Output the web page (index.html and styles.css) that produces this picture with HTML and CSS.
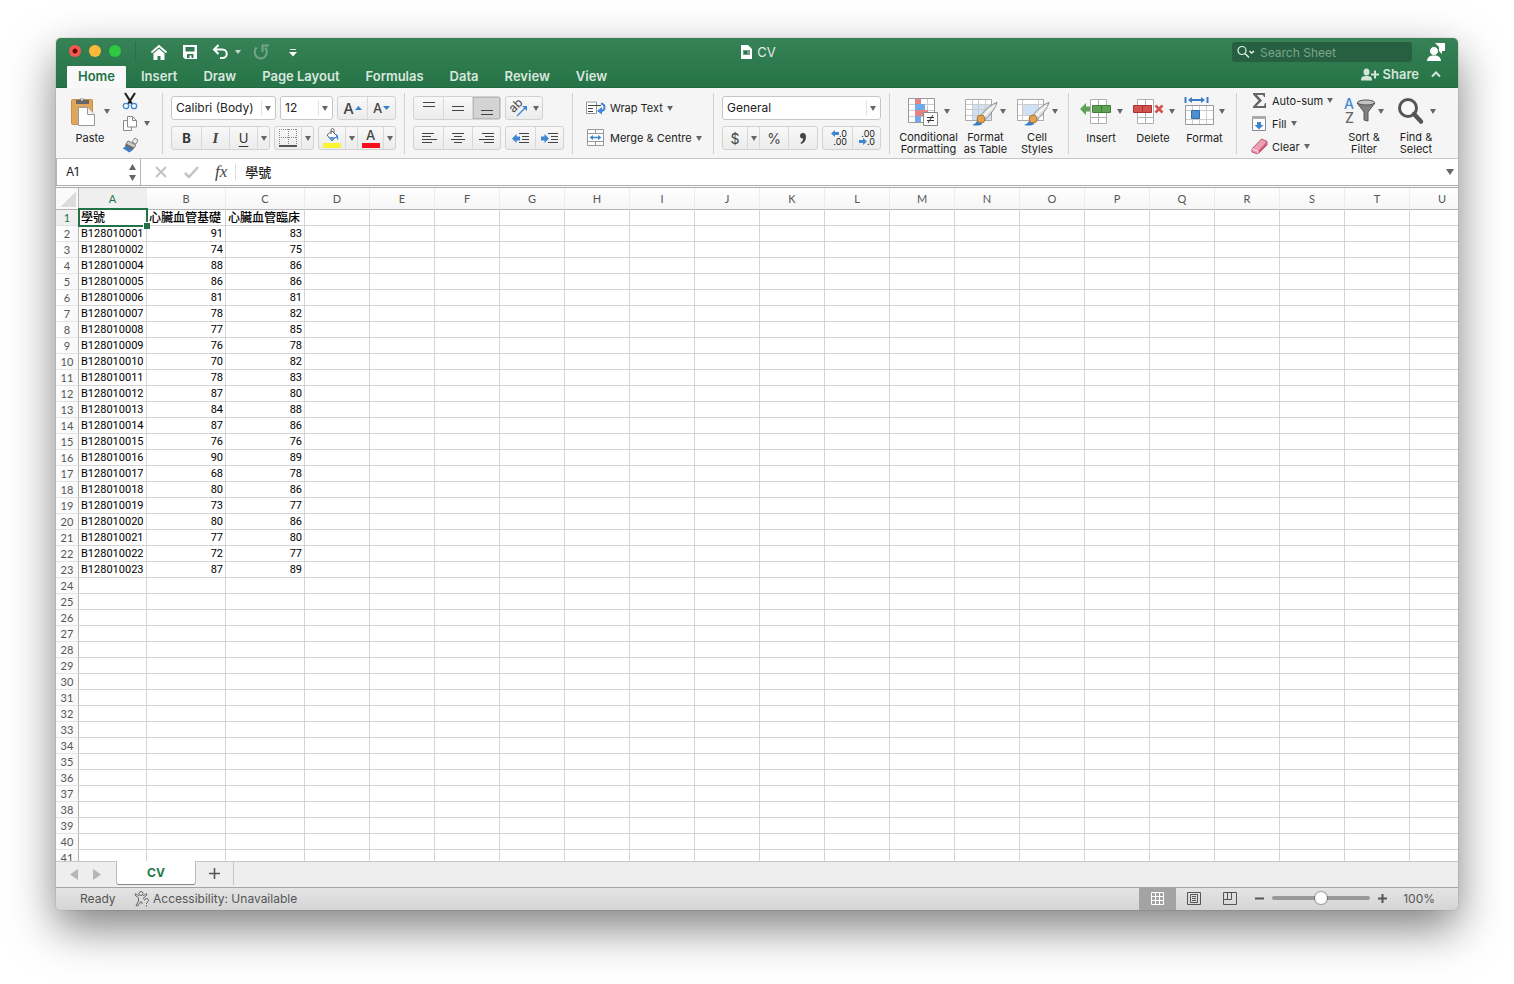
FILE: index.html
```
<!DOCTYPE html>
<html lang="en">

<head>
  <meta charset="UTF-8">
  <meta name="viewport" content="width=device-width, initial-scale=1.0">
  <title>CV</title>
  <link rel="stylesheet" href="styles.css">
</head>

<body>
  <div class="window">
    <header class="top">
      <div class="titlebar">
        <div class="lights">
          <button class="light red" aria-label="Close"></button>
          <button class="light yellow" aria-label="Minimise"></button>
          <button class="light green" aria-label="Zoom"></button>
        </div>
        <div class="quick">
          <button aria-label="Home">
            <svg width="18" height="16" viewBox="0 0 18 16"><path d="M1.500 8.500L9 2l7.500 6.500" fill="none" stroke="#fff" stroke-width="2"/><path d="M3.500 9.500L9 4.800l5.500 4.700V16h-4v-4h-3v4h-4z" fill="#fff"/></svg>
          </button>
          <button aria-label="Save">
            <svg width="16" height="16" viewBox="0 0 16 16"><path d="M1 1h14v14H3l-2-2z" fill="#fff"/><path d="M3.500 3h9v4.500h-9zM5 10h6.500v4H9.500v-2.500h-2V14H5z" fill="#2f7a50"/></svg>
          </button>
          <button aria-label="Undo">
            <svg width="17" height="16" viewBox="0 0 17 16"><path d="M6.500 1L2 5.500 6.500 10M2 5.500h8.500a4 4 0 0 1 0 8.500H8" fill="none" stroke="#fff" stroke-width="2"/></svg>
          </button>
          <span class="caret light-caret"></span>
          <button class="redo" aria-label="Redo">
            <svg width="16" height="16" viewBox="0 0 16 16"><path d="M3.500 3.500a6 6.500 0 1 0 8.500 0M9.500 8V1.500H16" fill="none" stroke="#73a68a" stroke-width="2"/></svg>
          </button>
          <button class="customise" aria-label="Customise toolbar">
            <svg width="8" height="9" viewBox="0 0 8 9"><path d="M1 1.500h6" stroke="#dfeae4" stroke-width="1"/><path d="M0 4h8L4 8.500z" fill="#fff"/></svg>
          </button>
        </div>
        <div class="doc-title">
          <svg width="11" height="14" viewBox="0 0 11 14"><path d="M0 0h7l4 4v10H0z" fill="#fff"/><path d="M2 5h7v5H2z" fill="#6da487"/><path d="M3 6h3v3H3z" fill="#277449"/></svg>
          <span>CV</span>
        </div>
        <div class="title-right">
          <label class="search">
            <svg width="20" height="14" viewBox="0 0 20 14"><circle cx="6" cy="5.500" r="4" fill="none" stroke="#e6efe9" stroke-width="1.200"/><path d="M9 8.500l4 4M13.500 6l2.200 2 2.200-2" fill="none" stroke="#e6efe9" stroke-width="1.400"/></svg>
            <input type="text" placeholder="Search Sheet" aria-label="Search Sheet">
          </label>
          <button class="user" aria-label="Account">
            <svg width="20" height="20" viewBox="0 0 20 20"><path d="M9 1h10v8h-3v3l-3-3V5z" fill="#fff"/><circle cx="8" cy="9" r="4.500" fill="#fff" stroke="#2f7a50"/><path d="M1 19c.5-4 2.500-5.500 7-5.500s6.500 1.500 7 5.500z" fill="#fff"/></svg>
          </button>
        </div>
      </div>
      <nav class="tabs">
        <button class="tab active">Home</button>
        <button class="tab">Insert</button>
        <button class="tab">Draw</button>
        <button class="tab">Page Layout</button>
        <button class="tab">Formulas</button>
        <button class="tab">Data</button>
        <button class="tab">Review</button>
        <button class="tab">View</button>
        <div class="share">
          <button>
            <svg width="18" height="13" viewBox="0 0 18 13"><ellipse cx="5.500" cy="4" rx="3" ry="3.500" fill="#d4e4db"/><path d="M0 12.500c0-4 2-4.500 5.500-4.500s5.500.5 5.500 4.500z" fill="#d4e4db"/><path d="M14 2.500v8M10 6.500h8" stroke="#d4e4db" stroke-width="2"/></svg>
            Share
          </button>
          <button aria-label="Collapse ribbon">
            <svg width="10" height="7" viewBox="0 0 10 7"><path d="M1 5.500l4-4 4 4" fill="none" stroke="#d4e4db" stroke-width="2"/></svg>
          </button>
        </div>
      </nav>
    </header>

    <section class="ribbon">
      <div class="group clipboard">
        <button class="big paste">
          <span class="big-icon">
            <svg width="26" height="31" viewBox="0 0 26 31"><rect x="1.500" y="3.500" width="21" height="25" rx="1" fill="#dfa75e" stroke="#c98f48"/><path d="M6 8V4h3a3.500 3.500 0 0 1 6 0h4v4z" fill="#666"/><circle cx="12" cy="3.500" r="1.200" fill="#ddd"/><path d="M8.500 11.500h9l7 7v11h-16z" fill="#fff" stroke="#999"/><path d="M17.500 11.500v7h7" fill="#f2f2f2" stroke="#999"/></svg>
            <i class="caret"></i>
          </span>
          Paste
        </button>
        <div class="clip-tools">
          <button aria-label="Cut">
            <svg width="16" height="17" viewBox="0 0 16 17"><path d="M3 0l7 11M13 0L6 11" stroke="#222" stroke-width="2.200"/><circle cx="4" cy="13" r="2.700" fill="none" stroke="#3f87d4" stroke-width="1.300"/><circle cx="12" cy="13" r="2.700" fill="none" stroke="#3f87d4" stroke-width="1.300"/></svg>
          </button>
          <button aria-label="Copy">
            <svg width="16" height="17" viewBox="0 0 16 17"><path d="M1.500 5.500h8v10h-8z" fill="#fff" stroke="#8a8a8a"/><path d="M5.500 1.500h5l4 4v6.500h-9z" fill="#fff" stroke="#8a8a8a"/><path d="M10.500 1.500v4h4" fill="none" stroke="#8a8a8a"/></svg>
            <i class="caret"></i>
          </button>
          <button aria-label="Format painter">
            <svg width="17" height="17" viewBox="0 0 17 17"><path d="M10 5l3-4 3 2-2 4z" fill="#eee" stroke="#888"/><path d="M6 4l8 4-2 3-8-4z" fill="#ccc" stroke="#777"/><path d="M4 7l8 4c-1 2-3 4-5 4.500-2-1.500-4-3.500-6.500-4 2-1 3-2.500 3.500-4.500z" fill="#3f7fc0"/><path d="M4 7l8 4-1 1.500-8-4z" fill="#7d6657"/></svg>
          </button>
        </div>
      </div>

      <div class="group stack font-group">
        <div class="row">
          <span class="combo font-name"><select aria-label="Font"><option>Calibri (Body)</option></select></span>
          <span class="combo font-size"><select aria-label="Font size"><option>12</option></select></span>
          <span class="buttons">
            <button class="w29" aria-label="Increase font size"><b class="grow">A</b><svg width="7" height="4" viewBox="0 0 7 4"><path d="M0 4l3.500-4L7 4z" fill="#3a80c9"/></svg></button>
            <button class="w28" aria-label="Decrease font size"><b class="shrink">A</b><svg width="7" height="4" viewBox="0 0 7 4"><path d="M0 0l3.500 4L7 0z" fill="#3a80c9"/></svg></button>
          </span>
        </div>
        <div class="row">
          <span class="buttons">
            <button class="w29 bold">B</button>
            <button class="w28 italic">I</button>
            <button class="w28 underline">U</button>
            <button class="drop" aria-label="Underline style"><i class="caret"></i></button>
          </span>
          <span class="buttons">
            <button class="w26" aria-label="Borders"><svg width="18" height="18" viewBox="0 0 18 18"><path d="M.5 0v16M17.500 0v16M9.500 0v16M0 .5h18M0 8.500h18" stroke="#888" stroke-dasharray="1 1"/><path d="M0 17h18" stroke="#222" stroke-width="1.500"/></svg></button>
            <button class="drop" aria-label="Border style"><i class="caret"></i></button>
          </span>
          <span class="buttons">
            <button class="w26" aria-label="Fill colour"><svg width="18" height="20" viewBox="0 0 18 20"><path d="M4 7l5-4 5 5-5 5z" fill="#fff" stroke="#666"/><path d="M5 9h8l-4 4z" fill="#5d9be0"/><path d="M8 6V1.500q1.500-2 3 0V5" fill="none" stroke="#666"/><path d="M13 6q3 1 2 6-2-1-2-6z" fill="#3f87d4"/><rect y="15" width="18" height="5" rx="1" fill="#f9f532"/></svg></button>
            <button class="drop" aria-label="Fill colours"><i class="caret"></i></button>
            <button class="w26 font-colour" aria-label="Font colour"><span>A</span></button>
            <button class="drop" aria-label="Font colours"><i class="caret"></i></button>
          </span>
        </div>
      </div>

      <div class="group stack">
        <div class="row">
          <span class="buttons">
            <button class="w29" aria-label="Top align"><svg width="16" height="16" viewBox="0 0 16 16"><path d="M2 2.500h12M2 6.500h12" stroke="#444"/></svg></button>
            <button class="w29" aria-label="Middle align"><svg width="16" height="16" viewBox="0 0 16 16"><path d="M2 6.500h12M2 10.500h12" stroke="#444"/></svg></button>
            <button class="w28 pressed" aria-label="Bottom align"><svg width="16" height="16" viewBox="0 0 16 16"><path d="M2 10.500h12M2 14.500h12" stroke="#444"/></svg></button>
          </span>
          <span class="buttons">
            <button class="orient" aria-label="Orientation"><svg width="18" height="18" viewBox="0 0 18 18"><g transform="rotate(-45 7 8)"><text x="0" y="10" font-family="Inter, sans-serif" font-size="12" fill="#444">ab</text></g><path d="M7 17l8-8" stroke="#3f87d4" stroke-width="1.300"/><path d="M12 7h5v5z" fill="#3f87d4"/></svg><i class="caret"></i></button>
          </span>
        </div>
        <div class="row">
          <span class="buttons">
            <button class="w29" aria-label="Align left"><svg width="16" height="11" viewBox="0 0 16 11"><path d="M1 .5h12M1 3.500h9M1 6.500h15M1 9.500h10" stroke="#444"/></svg></button>
            <button class="w29" aria-label="Centre"><svg width="16" height="11" viewBox="0 0 16 11"><path d="M2 .5h12M4 3.500h8M1 6.500h14M4 9.500h8" stroke="#444"/></svg></button>
            <button class="w28" aria-label="Align right"><svg width="16" height="11" viewBox="0 0 16 11"><path d="M3 .5h12M6 3.500h9M0 6.500h15M5 9.500h10" stroke="#444"/></svg></button>
          </span>
          <span class="buttons">
            <button class="w29" aria-label="Decrease indent"><svg width="17" height="11" viewBox="0 0 17 11"><path d="M0 5.500L4.500 1v2.500H8v4H4.500V10z" fill="#3f87d4"/><path d="M7 .5h10M10 3.500h7M10 6.500h7M7 9.500h10" stroke="#444"/></svg></button>
            <button class="w28" aria-label="Increase indent"><svg width="17" height="11" viewBox="0 0 17 11"><path d="M8 5.500L3.500 1v2.500H0v4h3.500V10z" fill="#3f87d4"/><path d="M7 .5h10M10 3.500h7M10 6.500h7M7 9.500h10" stroke="#444"/></svg></button>
          </span>
        </div>
      </div>

      <div class="group stack wrap-group">
        <button class="line">
          <svg width="20" height="18" viewBox="0 0 20 18"><path d="M.5 3v11.500h10V3z" fill="#fff" stroke="#999"/><path d="M2 6.500h13M2 9.500h5M2 12.500h5" stroke="#444"/><path d="M15 4.500c5 1 4.500 7.500-.5 7.500" fill="none" stroke="#3f87d4" stroke-width="2"/><path d="M11 12l5-4v7.500z" fill="#3f87d4"/></svg>
          Wrap Text <i class="caret"></i>
        </button>
        <button class="line">
          <svg width="20" height="18" viewBox="0 0 20 18"><path d="M1.500.5h16v16h-16zM1.500 4.500h16M1.500 12.500h16M9.500.5v4M9.500 12.500v4" fill="#fff" stroke="#999"/><path d="M5 8.500h9" stroke="#3f87d4" stroke-width="1.300"/><path d="M3.500 8.500L7 6v5zM15.500 8.500L12 6v5z" fill="#3f87d4"/></svg>
          Merge &amp; Centre <i class="caret"></i>
        </button>
      </div>

      <div class="group stack">
        <div class="row">
          <span class="combo number-format"><select aria-label="Number format"><option>General</option></select></span>
        </div>
        <div class="row">
          <span class="buttons">
            <button class="w24 symbol">$</button>
            <button class="drop" aria-label="Currencies"><i class="caret"></i></button>
            <button class="w29 symbol">%</button>
            <button class="w29" aria-label="Comma style"><svg width="8" height="13" viewBox="0 0 8 13"><path d="M1 3.500a2.700 2.700 0 0 1 3-2.500c2 0 3 1.500 3 4 0 3.500-2 6-5 7l-.5-1.500C3 10 4 8.500 4.200 6.500 2 7 1 5.500 1 3.500z" fill="#444"/></svg></button>
          </span>
          <span class="buttons">
            <button class="w29 decimals" aria-label="Increase decimal">
              <span><svg width="8" height="7" viewBox="0 0 8 7"><path d="M0 3.500L4 0v2h4v3H4v2z" fill="#3f87d4"/></svg>.0</span>
              <span>.00</span>
            </button>
            <button class="w28 decimals" aria-label="Decrease decimal">
              <span>.00</span>
              <span><svg width="8" height="7" viewBox="0 0 8 7"><path d="M8 3.500L4 0v2H0v3h4v2z" fill="#3f87d4"/></svg>.0</span>
            </button>
          </span>
        </div>
      </div>

      <div class="group styles-group">
        <button class="big w57">
          <span class="big-icon">
            <svg width="31" height="30" viewBox="0 0 31 30"><path d="M.5 2.500h26v24H.5z" fill="#fff"/><path d="M7.500 3v23M19.500 3v23M1 8.500h25M1 14.500h25M1 20.500h25" stroke="#ccc"/><path d="M7 3h6v5H7zM7 14h13v6H7z" fill="#e58383"/><path d="M7 8h10v6H7zM7 20h6v6H7z" fill="#6faaec"/><path d="M.5 2.500h26v24H.5z" fill="none" stroke="#999"/><path d="M15.500 16.500h14v13h-14z" fill="#fff" stroke="#888"/><path d="M19 21.500h7M19 24.500h7M25 19l-5 8" stroke="#333"/></svg>
            <i class="caret"></i>
          </span>
          Conditional<br>Formatting
        </button>
        <button class="big w57">
          <span class="big-icon">
            <svg width="33" height="30" viewBox="0 0 33 30"><path d="M.5 3.500h26v21H.5z" fill="#fff"/><path d="M7 9h20v16H7z" fill="#cfe1f5"/><path d="M7.500 4v20M13.500 4v20M20.500 4v20M1 8.500h25M1 13.500h25M1 19.500h25" stroke="#ccc"/><path d="M.5 3.500h26v21H.5z" fill="none" stroke="#aaa"/><path d="M32 6.500c-6 2-12 7-16 13l4 4c5-4 10-11 12-17z" fill="#e2e2e2" stroke="#888"/><path d="M30 9.500c-5 4-9 8-12 11.500" stroke="#fff" stroke-width="1.500"/><path d="M7 29q4-1 5.500-5.500l5 4.500q-4 2.500-10.500 1z" fill="#2f7fd3"/><circle cx="16" cy="23" r="4" fill="#e0a353" stroke="#a87436"/></svg>
            <i class="caret tight"></i>
          </span>
          Format<br>as Table
        </button>
        <button class="big w46">
          <span class="big-icon">
            <svg width="33" height="30" viewBox="0 0 33 30"><path d="M.5 3.500h26v21H.5z" fill="#fff"/><path d="M5 9h17v11H5z" fill="#cfe1f5"/><path d="M5.500 4v20M21.500 4v20M1 8.500h25M1 19.500h25" stroke="#ccc"/><path d="M.5 3.500h26v21H.5z" fill="none" stroke="#aaa"/><path d="M32 6.500c-6 2-12 7-16 13l4 4c5-4 10-11 12-17z" fill="#e2e2e2" stroke="#888"/><path d="M30 9.500c-5 4-9 8-12 11.500" stroke="#fff" stroke-width="1.500"/><path d="M7 29q4-1 5.500-5.500l5 4.500q-4 2.500-10.500 1z" fill="#2f7fd3"/><circle cx="16" cy="23" r="4" fill="#e0a353" stroke="#a87436"/></svg>
            <i class="caret tight"></i>
          </span>
          Cell<br>Styles
        </button>
      </div>

      <div class="group cells-group">
        <button class="big w52">
          <span class="big-icon">
            <svg width="32" height="30" viewBox="0 0 32 30"><path d="M10.500 2.500h16v24h-16zM10.500 20.500h16M18.500 2.500v24" fill="#fff" stroke="#b0b0b0"/><path d="M12.500 8.500h18v7h-18z" fill="#5da156" stroke="#3f7d39"/><path d="M21.500 9v6" stroke="#3f7d39"/><path d="M0 12l6-6v3.500h4v5H6V18z" fill="#5da156"/></svg>
            <i class="caret"></i>
          </span>
          Insert
        </button>
        <button class="big w52">
          <span class="big-icon">
            <svg width="32" height="30" viewBox="0 0 32 30"><path d="M5.500 2.500h16v24h-16zM5.500 20.500h16M13.500 2.500v24" fill="#fff" stroke="#b0b0b0"/><path d="M1.500 8.500h18v7h-18z" fill="#d3504f" stroke="#a83535"/><path d="M10.500 9v6" stroke="#a83535"/><path d="M23.500 8.500l7 7M30.500 8.500l-7 7" stroke="#d3504f" stroke-width="2.500"/></svg>
            <i class="caret"></i>
          </span>
          Delete
        </button>
        <button class="big w51">
          <span class="big-icon">
            <svg width="30" height="30" viewBox="0 0 30 30"><path d="M1.500 8.500h28v19h-28z" fill="#fff"/><path d="M8.500 9v18M15.500 9v18M22.500 9v18M2 13.500h27M2 22.500h27" stroke="#ccc"/><path d="M1.500 8.500h28v19h-28z" fill="none" stroke="#999"/><path d="M7.500 13.500h8v8h-8z" fill="#4d8fd1" stroke="#2f6dab"/><path d="M1.500 0v6M23.500 0v6M6 3h13" stroke="#3a7cc0" stroke-width="2"/><path d="M4 3l4-3v6zM21 3l-4-3v6z" fill="#3a7cc0"/></svg>
            <i class="caret"></i>
          </span>
          Format
        </button>
      </div>

      <div class="group editing">
        <div class="edit-list">
          <button class="line">
            <svg width="17" height="17" viewBox="0 0 17 17"><path d="M2 1h12v4h-1l-1-2H6l5 5.500L5.500 14H13l1-3h1v5H2v-1.500l5.500-6L2 2.500z" fill="#666"/></svg>
            Auto-sum <i class="caret"></i>
          </button>
          <button class="line">
            <svg width="17" height="17" viewBox="0 0 17 17"><path d="M1.500 1.500h13v14h-13z" fill="#fff" stroke="#888"/><path d="M1 1h14v3H1z" fill="#aaa"/><path d="M6 7h4v3h2.500L8 14.500 3.500 10H6z" fill="#3f87d4"/></svg>
            Fill <i class="caret"></i>
          </button>
          <button class="line">
            <svg width="17" height="17" viewBox="0 0 17 17"><path d="M1 11L10.500 1l5.500 2.500v3.500L7 16l-6-2z" fill="#ee9fb2" stroke="#b5546c"/><path d="M7 13l9-9.500V7L7 16z" fill="#cf5f7c"/><path d="M1 11l6 2v3" fill="none" stroke="#fff" stroke-width=".7"/></svg>
            Clear <i class="caret"></i>
          </button>
        </div>
        <button class="big w52">
          <span class="big-icon">
            <svg width="32" height="30" viewBox="0 0 32 30"><text x="0" y="13" font-family="Inter, sans-serif" font-size="14" font-weight="500" fill="#3f87d4">A</text><text x="1" y="27" font-family="Inter, sans-serif" font-size="14" font-weight="500" fill="#666">Z</text><path d="M13 7l7 9v8l4 1v-9l7-9z" fill="#808080" stroke="#555"/><ellipse cx="22" cy="6.500" rx="8.500" ry="2.500" fill="#c4c4c4" stroke="#555"/></svg>
            <i class="caret tight"></i>
          </span>
          Sort &amp;<br>Filter
        </button>
        <button class="big w52">
          <span class="big-icon">
            <svg width="28" height="30" viewBox="0 0 28 30"><circle cx="11" cy="12" r="8.500" fill="#f9f9f9" stroke="#555" stroke-width="3"/><path d="M17 18l7 7.500" stroke="#555" stroke-width="4.500" stroke-linecap="round"/></svg>
            <i class="caret"></i>
          </span>
          Find &amp;<br>Select
        </button>
      </div>
    </section>

    <section class="formula-bar">
      <div class="name-box">
        <input type="text" value="A1" aria-label="Name box">
        <svg width="7" height="17" viewBox="0 0 7 17"><path d="M0 6l3.500-6L7 6zM0 11l3.500 6L7 11z" fill="#666"/></svg>
      </div>
      <div class="formula-tools">
        <button aria-label="Cancel"><svg width="14" height="14" viewBox="0 0 14 14"><path d="M2 2l10 10M12 2L2 12" stroke="#c4c4c4" stroke-width="2"/></svg></button>
        <button aria-label="Enter"><svg width="15" height="14" viewBox="0 0 15 14"><path d="M1 8l4 4 9-10" fill="none" stroke="#c4c4c4" stroke-width="2.500"/></svg></button>
        <button class="fx" aria-label="Insert function">fx</button>
      </div>
      <input class="formula" type="text" value="學號" aria-label="Formula">
      <span class="expand"></span>
    </section>

    <main class="sheet">
      <table id="grid">
        <colgroup id="cols"></colgroup>
        <thead></thead>
        <tbody></tbody>
      </table>
    </main>

    <section class="sheet-tabs">
      <button class="scroll" aria-label="Previous sheet"><svg width="8" height="11" viewBox="0 0 8 11"><path d="M8 0v11L0 5.500z" fill="#b5b5b5"/></svg></button>
      <button class="scroll" aria-label="Next sheet"><svg width="8" height="11" viewBox="0 0 8 11"><path d="M0 0v11l8-5.500z" fill="#b5b5b5"/></svg></button>
      <button class="sheet-tab">CV</button>
      <button class="add" aria-label="Add sheet"><svg width="11" height="11" viewBox="0 0 11 11"><path d="M5.500 0v11M0 5.500h11" stroke="#555" stroke-width="1.600"/></svg></button>
    </section>

    <footer class="status">
      <span class="ready">Ready</span>
      <svg width="16" height="16" viewBox="0 0 16 16"><g fill="none" stroke="#666"><circle cx="7" cy="2.500" r="2"/><path d="M5 5L1.500 2.500 1 4l3.500 3v3L2 14.500l1.500.5L7 10.500 8.500 13M9 5l3.500-2.500L13 4 9.500 7v1"/><path d="M10.500 9.500q0-2 2-2t2 2q0 1-2 2.500v1M12.500 14v1.500"/></g></svg>
      <span class="access">Accessibility: Unavailable</span>
      <div class="views">
        <button class="view active" aria-label="Normal"><svg width="13" height="13" viewBox="0 0 13 13"><path d="M.5.5h12v12H.5zM.5 4.500h12M.5 8.500h12M4.500.5v12M8.500.5v12" fill="none" stroke="#fff"/></svg></button>
        <button class="view" aria-label="Page layout"><svg width="14" height="13" viewBox="0 0 14 13"><path d="M.5.5h13v12H.5zM3.500 2.500h7v8h-7zM5 4.500h4M5 6.500h4M5 8.500h4" fill="none" stroke="#555"/></svg></button>
        <button class="view" aria-label="Page break preview"><svg width="14" height="13" viewBox="0 0 14 13"><path d="M.5.5h13v12H.5zM.5 7.500h8V.5M4.500.5v7" fill="none" stroke="#555"/></svg></button>
      </div>
      <div class="zoom">
        <button aria-label="Zoom out"><svg width="9" height="9" viewBox="0 0 9 9"><path d="M0 4.500h9" stroke="#555" stroke-width="2"/></svg></button>
        <input type="range" min="0" max="100" value="50" aria-label="Zoom">
        <button aria-label="Zoom in"><svg width="9" height="9" viewBox="0 0 9 9"><path d="M0 4.500h9M4.500 0v9" stroke="#555" stroke-width="2"/></svg></button>
        <span class="percent">100%</span>
      </div>
    </footer>
  </div>
  <script src="sheet.js"></script>
</body>

</html>
```
FILE: styles.css
```
* {
  box-sizing: border-box;
}

body {
  margin: 0;
  height: 100vh;
  padding: 38px 56px 74px;
  background: #fff;
  font-family: Inter, "Noto Sans CJK TC", sans-serif;
  font-size: 12px;
  color: #222;
  overflow: hidden;
}

button,
input,
select {
  font: inherit;
  color: inherit;
  background: none;
  border: 0;
  margin: 0;
  padding: 0;
  outline: 0;
}

button {
  display: flex;
  align-items: center;
  justify-content: center;
  flex-shrink: 0;
}

svg {
  display: block;
  flex-shrink: 0;
  overflow: visible;
}

.window {
  display: flex;
  flex-direction: column;
  height: 100%;
  overflow: hidden;
  border-radius: 5px;
  background: #fff;
  box-shadow: 0 0 1px rgba(0, 0, 0, 0.6), 0 18px 45px rgba(0, 0, 0, 0.5);
}

.caret {
  flex-shrink: 0;
  width: 0;
  height: 0;
  border: 3px solid transparent;
  border-top: 5px solid #666;
  border-bottom: 0;
}

/* title bar and tabs */

.top {
  background: linear-gradient(#378257, #257346);
  border-bottom: 1px solid #1f673d;
  color: #fff;
}

.titlebar {
  display: flex;
  align-items: center;
  position: relative;
  height: 28px;
}

.lights {
  display: flex;
  gap: 8px;
  width: 80px;
  height: 20px;
  padding: 0 0 2px 13px;
  align-items: center;
  border-right: 1px solid #2a6f49;
}

.light {
  width: 12px;
  height: 12px;
  border-radius: 50%;
}

.light.red {
  background: radial-gradient(#5c0f0a 2px, #f9564f 3px);
}

.light.yellow {
  background: #fdb83a;
}

.light.green {
  background: #2fc840;
}

.quick {
  display: flex;
  align-items: center;
  padding-left: 14px;
}

.quick button + button {
  margin-left: 14px;
}

.quick .light-caret {
  margin-left: 6px;
  border-top: 4px solid #c5dacd;
}

.quick .redo {
  margin-left: 12px;
}

.quick .redo + .customise {
  margin-left: 20px;
}

.doc-title {
  position: absolute;
  left: 0;
  right: 0;
  display: flex;
  justify-content: center;
  align-items: center;
  gap: 5px;
  padding-left: 3px;
  pointer-events: none;
  font-size: 13px;
  color: #e3ede7;
}

.title-right {
  display: flex;
  align-items: center;
  gap: 14px;
  margin-left: auto;
  padding-right: 12px;
}

.search {
  display: flex;
  align-items: center;
  gap: 4px;
  width: 180px;
  height: 20px;
  padding: 0 4px;
  border-radius: 3px;
  background: #276041;
}

.search input {
  flex: 1;
  min-width: 0;
}

.search input::placeholder {
  color: #7ba48d;
  opacity: 1;
}

.tabs {
  display: flex;
  height: 21px;
  padding-left: 11px;
}

.tab {
  padding: 0 13px 2px;
  font-size: 13px;
  font-weight: 600;
  color: #d9e7df;
}

.tab.active {
  width: 59px;
  height: 22px;
  margin-right: 2px;
  padding: 0 0 3px;
  border-radius: 1px 1px 0 0;
  background: #f8f8f8;
  color: #217346;
}

.share {
  display: flex;
  align-items: center;
  gap: 12px;
  height: 16px;
  margin-left: auto;
  padding-right: 17px;
  font-size: 13px;
  font-weight: 600;
  color: #d4e4db;
}

.share button {
  gap: 4px;
}

/* ribbon */

.ribbon {
  display: flex;
  height: 71px;
  padding: 5px 0 4px;
  border-bottom: 1px solid #c6c6c6;
  background: #f5f5f5;
}

.group {
  display: flex;
  flex-shrink: 0;
  padding: 0 8px;
  border-right: 1px solid #d0d0d0;
}

.group:last-child {
  border-right: 0;
}

.stack {
  flex-direction: column;
  gap: 6px;
  padding-top: 3px;
}

.row {
  display: flex;
  gap: 4px;
}

.buttons {
  display: flex;
  height: 24px;
  border: 1px solid #d2d2d2;
  border-radius: 3px;
  background: linear-gradient(#f8f8f8, #ececec);
}

.buttons button + button {
  border-left: 1px solid #d8d8d8;
}

.w24 {
  width: 24px;
}

.w26 {
  width: 26px;
}

.w28 {
  width: 28px;
}

.w29 {
  width: 29px;
}

.w46 {
  width: 46px;
}

.w51 {
  width: 51px;
}

.w52 {
  width: 52px;
}

.w57 {
  width: 57px;
}

.buttons .drop {
  width: 12px;
}

.buttons .pressed {
  background: #d4d4d4;
  box-shadow: inset 0 0 0 1px #b8b8b8;
}

.orient {
  width: 36px;
  gap: 5px;
}

.combo {
  display: flex;
  position: relative;
  height: 24px;
  border: 1px solid #c6c6c6;
  border-radius: 3px;
  background: #fff;
}

.combo select {
  appearance: none;
  width: 100%;
  padding: 0 14px 2px 4px;
}

/* divider and arrow over the end of the drop-down */
.combo::before {
  content: "";
  position: absolute;
  right: 13px;
  top: 3px;
  bottom: 3px;
  border-left: 1px solid #e4e4e4;
}

.combo::after {
  content: "";
  position: absolute;
  right: 4px;
  top: 9px;
  border: 3px solid transparent;
  border-top: 5px solid #666;
  border-bottom: 0;
  pointer-events: none;
}

.font-name {
  width: 105px;
}

.font-size {
  width: 53px;
}

.number-format {
  width: 159px;
}

.grow {
  font-size: 15px;
  font-weight: 500;
}

.shrink {
  font-size: 13px;
  font-weight: 500;
}

.buttons b {
  color: #444;
  margin-right: 1px;
}

.bold {
  font-size: 13px;
  font-weight: 700;
  color: #333;
}

.italic {
  font-family: "Liberation Serif", serif;
  font-size: 15px;
  font-style: italic;
  font-weight: 700;
  color: #444;
}

.underline {
  font-size: 13px;
  text-decoration: underline;
  text-underline-offset: 3px;
  color: #333;
}

.font-colour span {
  width: 18px;
  height: 19px;
  border-bottom: 5px solid #fb0d1b;
  font-size: 13px;
  font-weight: 500;
  line-height: 13px;
  text-align: center;
  color: #444;
}

.symbol {
  font-size: 14px;
  color: #444;
}

.decimals {
  flex-direction: column;
  align-items: flex-end;
  padding-right: 5px;
  font-size: 9px;
  line-height: 8px;
  color: #222;
}

.decimals span {
  display: flex;
}

.line {
  justify-content: flex-start;
  gap: 4px;
  font-size: 11px;
}

.wrap-group {
  width: 141px;
  padding-left: 13px;
}

.wrap-group .line {
  height: 24px;
}

.big {
  flex-direction: column;
  justify-content: flex-start;
  padding-top: 3px;
  font-size: 11px;
  line-height: 12px;
}

.big-icon {
  display: flex;
  align-items: center;
  gap: 5px;
  height: 36px;
  padding-bottom: 5px;
}

.big-icon .tight {
  margin-left: -3px;
}

.clipboard {
  width: 107px;
  padding-left: 14px;
}

.paste .big-icon {
  gap: 8px;
}

.clip-tools {
  display: flex;
  flex-direction: column;
  align-items: flex-start;
  justify-content: space-between;
  margin-left: 12px;
}

.clip-tools button {
  gap: 6px;
}

.styles-group {
  padding-left: 10px;
}

.cells-group {
  padding: 0 6px;
}

.editing {
  padding-left: 14px;
}

.edit-list {
  display: flex;
  flex-direction: column;
  gap: 6px;
  width: 87px;
  margin-top: -1px;
}

/* formula bar */

.formula-bar {
  display: flex;
  align-items: center;
  height: 29px;
  border-bottom: 3px double #aaa;
  background: #fff;
}

.name-box {
  display: flex;
  align-items: center;
  width: 85px;
  height: 26px;
  padding: 0 4px 0 9px;
  border: 1px solid #b4b4b4;
  border-top: 0;
  border-bottom: 0;
}

.name-box input {
  flex: 1;
  min-width: 0;
  padding-bottom: 2px;
}

.formula-tools {
  display: flex;
  align-items: center;
  gap: 16px;
  padding: 0 8px 0 13px;
  border-right: 1px solid #ddd;
}

.fx {
  font-family: "Liberation Serif", serif;
  font-size: 17px;
  line-height: 16px;
  font-style: italic;
  color: #444;
}

.formula {
  flex: 1;
  padding: 0 0 2px 9px;
  font-size: 13px;
  font-weight: 500;
}

.expand {
  margin-right: 4px;
  border: 4px solid transparent;
  border-top: 6px solid #666;
  border-bottom: 0;
}

/* grid */

.sheet {
  flex: 1;
  min-height: 0;
  overflow: hidden;
}

table {
  width: 1px;
  table-layout: fixed;
  border-collapse: separate;
  border-spacing: 0;
  font-family: Lato, "Noto Sans CJK TC", sans-serif;
  font-size: 11px;
  line-height: 15px;
  color: #000;
}

.col-head {
  width: 23px;
}

.col-id {
  width: 68px;
}

.col-score {
  width: 79px;
}

.col-empty {
  width: 65px;
}

th {
  padding: 0;
  font-weight: 400;
  color: #555;
}

thead th {
  height: 22px;
  border-bottom: 1px solid #b4b4b4;
  border-right: 1px solid #ececec;
  background: linear-gradient(#fff, #f5f5f5);
}

tbody th {
  height: 16px;
  border-right: 1px solid #b4b4b4;
  border-bottom: 1px solid #e4e4e4;
  background: linear-gradient(to right, #fff, #f8f8f8);
}

thead .corner {
  border-right: 1px solid #b4b4b4;
  background: linear-gradient(135deg, transparent 50%, #dcdcdc 50%) 4px 4px / 16px 15px no-repeat, #fafafa;
}

th.current {
  color: #217346;
  background: #efefef;
}

td {
  height: 16px;
  padding: 1px 2px 0;
  border-right: 1px solid #d4d4d4;
  border-bottom: 1px solid #d4d4d4;
  font-family: Roboto, "Noto Sans CJK TC", sans-serif;
  line-height: 14px;
  white-space: nowrap;
}

.number {
  text-align: right;
}

.label {
  font-size: 12px;
  font-weight: 500;
}

/* selection frame and its fill handle */
.selected {
  position: relative;
}

.selected::before {
  content: "";
  position: absolute;
  inset: -2px -2px -2px -1px;
  border: 2px solid #217346;
}

.selected::after {
  content: "";
  position: absolute;
  right: -4px;
  bottom: -4px;
  width: 6px;
  height: 6px;
  background: #217346;
  border: 1px solid #fff;
  border-width: 1px 0 0 1px;
}

/* sheet tabs */

.sheet-tabs {
  display: flex;
  height: 27px;
  border-top: 1px solid #c8c8c8;
  border-bottom: 1px solid #a5a5a5;
  background: #eee;
}

.scroll {
  width: 8px;
  margin-left: 14px;
}

.scroll + .scroll {
  margin-left: 15px;
}

.sheet-tab {
  width: 80px;
  height: 24px;
  margin: -1px 0 0 15px;
  border: 1px solid #bbb;
  border-top: 0;
  border-bottom: 1px solid #888;
  border-radius: 0 0 3px 3px;
  background: #fff;
  font-weight: 700;
  color: #1f7a4a;
}

.add {
  width: 38px;
  height: 23px;
  border-right: 1px solid #c8c8c8;
}

/* status bar */

.status {
  display: flex;
  align-items: center;
  height: 22px;
  padding-left: 24px;
  background: linear-gradient(#e4e4e4, #d5d5d5);
  color: #555;
}

.ready,
.access,
.view,
.zoom {
  padding-bottom: 2px;
}

.ready {
  width: 54px;
}

.access {
  margin-left: 3px;
}

.views {
  display: flex;
  height: 100%;
  margin-left: auto;
}

.view {
  width: 36px;
}

.view.active {
  width: 37px;
  background: #a3a3a3;
}

.zoom {
  display: flex;
  align-items: center;
  gap: 8px;
  padding-left: 7px;
  padding-right: 23px;
}

.zoom input {
  appearance: none;
  width: 98px;
  height: 12px;
}

.zoom input::-webkit-slider-runnable-track {
  height: 4px;
  border-radius: 2px;
  background: #999;
}

.zoom input::-webkit-slider-thumb {
  appearance: none;
  width: 12px;
  height: 12px;
  margin-top: -4px;
  border-radius: 50%;
  background: #fff;
  box-shadow: 0 0 1px 1px rgba(0, 0, 0, 0.3);
}

.percent {
  margin-left: 8px;
}
```
FILE: sheet.js
```
const data = [
  ['學號', '心臟血管基礎', '心臟血管臨床'],
  ['B128010001', 91, 83],
  ['B128010002', 74, 75],
  ['B128010004', 88, 86],
  ['B128010005', 86, 86],
  ['B128010006', 81, 81],
  ['B128010007', 78, 82],
  ['B128010008', 77, 85],
  ['B128010009', 76, 78],
  ['B128010010', 70, 82],
  ['B128010011', 78, 83],
  ['B128010012', 87, 80],
  ['B128010013', 84, 88],
  ['B128010014', 87, 86],
  ['B128010015', 76, 76],
  ['B128010016', 90, 89],
  ['B128010017', 68, 78],
  ['B128010018', 80, 86],
  ['B128010019', 73, 77],
  ['B128010020', 80, 86],
  ['B128010021', 77, 80],
  ['B128010022', 72, 77],
  ['B128010023', 87, 89]
];

const grid = document.getElementById('grid');
const cols = document.getElementById('cols');
const sheet = grid.parentElement;

// only as many rows and columns as the sheet area can show
const ROWS = Math.ceil((sheet.clientHeight - 22) / 16);
const COLS = Math.min(26, 3 + Math.ceil((sheet.clientWidth - 249) / 65));

function addCol(name) {
  const col = document.createElement('col');
  col.className = name;
  cols.appendChild(col);
}

function addCell(row, tag, text, name) {
  const cell = document.createElement(tag);
  cell.textContent = text;
  if (name) cell.className = name;
  row.appendChild(cell);
}

addCol('col-head');
const head = grid.tHead.insertRow();
addCell(head, 'th', '', 'corner');
for (let c = 0; c < COLS; c++) {
  addCol(c === 0 ? 'col-id' : c < 3 ? 'col-score' : 'col-empty');
  addCell(head, 'th', String.fromCharCode(65 + c), c === 0 ? 'current' : '');
}

for (let r = 0; r < ROWS; r++) {
  const row = grid.tBodies[0].insertRow();
  addCell(row, 'th', r + 1, r === 0 ? 'current' : '');
  for (let c = 0; c < COLS; c++) {
    const value = data[r] && data[r][c] !== undefined ? data[r][c] : '';
    let name = '';
    if (typeof value === 'number') name = 'number';
    if (r === 0) name = c === 0 ? 'label selected' : 'label';
    addCell(row, 'td', value, name);
  }
}
```
